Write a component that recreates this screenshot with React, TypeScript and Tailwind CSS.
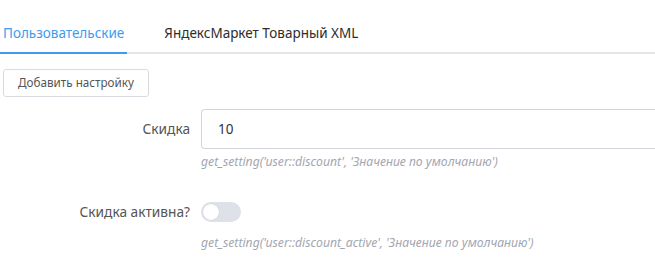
import React from "react";

export default function App() {
  return (
    <div className="w-[655px] h-[270px] overflow-hidden bg-white text-[#333] font-['Noto_Sans',sans-serif]">
      <div className="flex border-b-2 border-[#e4e6ec] pt-[24px]">
        <div className="px-[3px] pb-[10px] -mb-[2px] border-b-2 border-[#3d9cf0] text-[13.5px] leading-[18px] text-[#3d9cf0]">
          Пользовательские
        </div>
        <div className="ml-[37px] pb-[10px] text-[13.5px] leading-[18px] text-[#2d2d2d]">
          ЯндексМаркет Товарный XML
        </div>
      </div>

      <div className="pl-[3px] pt-[15px]">
        <button className="h-[28px] px-[14px] rounded-[3px] border border-[#d9dbe1] text-[11.7px] text-[#555] bg-white">
          Добавить настройку
        </button>
      </div>

      <div className="mt-[12px] grid grid-cols-[190px_1fr] gap-x-[11px]">
        <div className="flex items-center justify-end h-[40px] text-[13.7px] text-[#555]">Скидка</div>
        <div>
          <div className="h-[40px] border border-r-0 border-[#d3d5dc] rounded-l-[4px] flex items-center pl-[16px] text-[13.5px] text-[#333]">
            10
          </div>
          <div className="mt-[4px] text-[12.2px] italic text-[#a3a6b0]">
            get_setting('user::discount', 'Значение по умолчанию')
          </div>
        </div>

        <div className="mt-[31px] flex items-center justify-end h-[20px] text-[13.7px] text-[#555]">Скидка активна?</div>
        <div className="mt-[31px]">
          <div className="w-[40px] h-[20px] rounded-full bg-[#dfe1e8] p-[2px]">
            <div className="w-[16px] h-[16px] rounded-full bg-white shadow-[0_0_1px_rgba(0,0,0,0.2)]" />
          </div>
          <div className="mt-[12px] text-[12.2px] italic text-[#a3a6b0]">
            get_setting('user::discount_active', 'Значение по умолчанию')
          </div>
        </div>
      </div>
    </div>
  );
}
